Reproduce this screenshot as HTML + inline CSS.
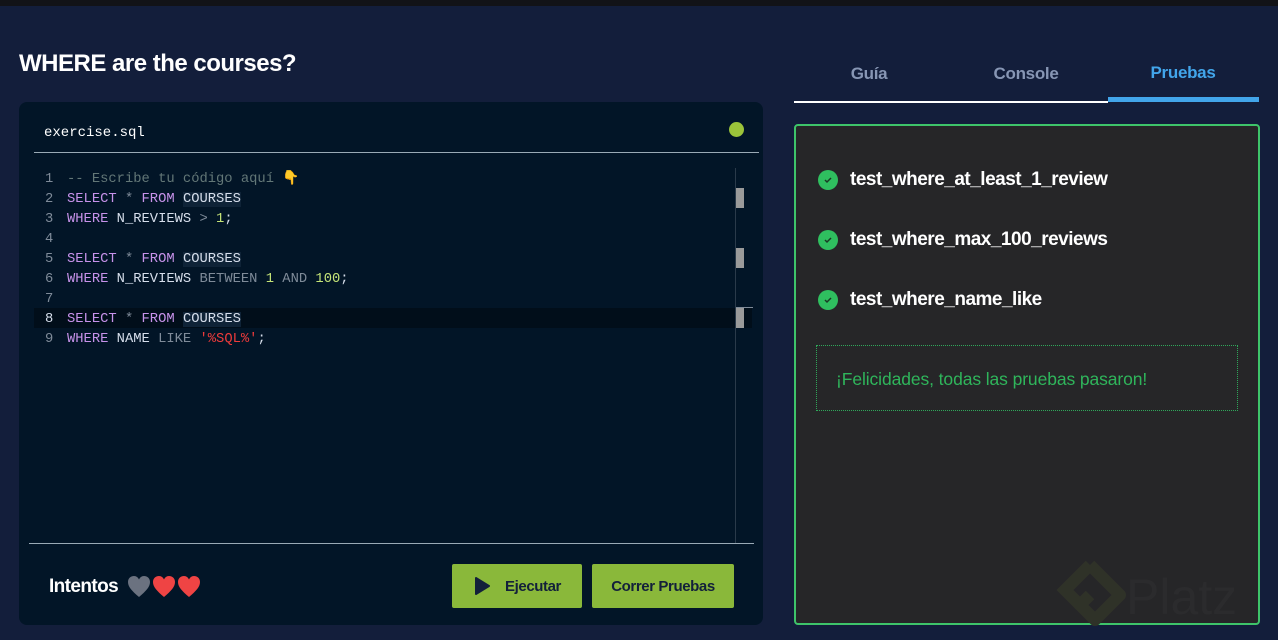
<!DOCTYPE html>
<html><head><meta charset="utf-8"><style>
*{margin:0;padding:0;box-sizing:border-box}
body{width:1278px;height:640px;background:#131e3b;font-family:"Liberation Sans",sans-serif;position:relative;overflow:hidden}
.abs{position:absolute}
.code{font-family:"Liberation Mono",monospace;font-size:13.8px;line-height:20px;white-space:pre;color:#d6deeb}
.k{color:#c792ea}.g{color:#7f8b99}.n{color:#c5e478}.s{color:#ef3b3b}.c{color:#637777}
.hl{background:#0f2337}
.tab{position:absolute;top:64px;font-weight:bold;font-size:17px;color:#8796b4;transform:translateX(-50%);letter-spacing:-0.3px}
.t{position:absolute;left:818px;display:flex;align-items:center;color:#fff;font-weight:bold;font-size:19px;letter-spacing:-0.5px}
.ck{width:20px;height:20px;border-radius:50%;background:#2fbf5f;margin-right:12px;display:flex;align-items:center;justify-content:center}
.btn{position:absolute;top:564px;height:44px;background:#8ab83a;border-radius:2px;color:#13203a;font-weight:bold;font-size:15px;display:flex;align-items:center;justify-content:center;letter-spacing:-0.4px}
</style></head><body>
<div class="abs" style="left:0;top:0;width:1278px;height:6px;background:#121317"></div>
<div class="abs" style="left:19px;top:50px;color:#fff;font-weight:bold;font-size:24px;letter-spacing:-0.5px">WHERE are the courses?</div>

<div class="abs" style="left:19px;top:102px;width:744px;height:523px;background:#021527;border-radius:8px"></div>
<div class="abs code" style="left:44px;top:123px;color:#fff;font-size:14px">exercise.sql</div>
<div class="abs" style="left:729px;top:122px;width:15px;height:15px;border-radius:50%;background:#9bc33a"></div>
<div class="abs" style="left:34px;top:152px;width:725px;height:1px;background:#9aaab6"></div>
<div class="abs" style="left:34px;top:308px;width:718px;height:20px;background:#010e1a"></div>
<div class="abs code g" style="left:45px;top:170px">1
2
3
4
5
6
7
<span style="color:#d6deeb">8</span>
9</div>
<div class="abs code" style="left:67px;top:170px"><span class="c">-- Escribe tu código aquí </span><span style="color:#f0b030">👇</span>
<span class="k">SELECT</span> <span class="g">*</span> <span class="k">FROM</span> <span class="hl">COURSES</span>
<span class="k">WHERE</span> N_REVIEWS <span class="g">&gt;</span> <span class="n">1</span>;

<span class="k">SELECT</span> <span class="g">*</span> <span class="k">FROM</span> <span class="hl">COURSES</span>
<span class="k">WHERE</span> N_REVIEWS <span class="g">BETWEEN</span> <span class="n">1</span> <span class="g">AND</span> <span class="n">100</span>;

<span class="k">SELECT</span> <span class="g">*</span> <span class="k">FROM</span> <span class="hl">COURSES</span>
<span class="k">WHERE</span> NAME <span class="g">LIKE</span> <span class="s">'%SQL%'</span>;</div>
<div class="abs" style="left:735px;top:168px;width:1px;height:375px;background:#2a3a4a"></div>
<div class="abs" style="left:736px;top:188px;width:8px;height:20px;background:#9a9a9a"></div>
<div class="abs" style="left:736px;top:248px;width:8px;height:20px;background:#9a9a9a"></div>
<div class="abs" style="left:736px;top:308px;width:8px;height:20px;background:#9a9a9a"></div>
<div class="abs" style="left:736px;top:307px;width:17px;height:1px;background:#7f8b99"></div>
<div class="abs" style="left:29px;top:543px;width:725px;height:1px;background:#9aaab6"></div>
<div class="abs" style="left:49px;top:576px;color:#fff;font-weight:bold;font-size:19px;letter-spacing:-0.6px">Intentos</div>
<svg class="abs" style="left:128px;top:576px" width="76" height="22" viewBox="0 0 76 22">
<g id="h"><path d="M11 21 C4 15 0 11 0 6 C0 2 3 0 6 0 C8.5 0 10 1.5 11 3.5 C12 1.5 13.5 0 16 0 C19 0 22 2 22 6 C22 11 18 15 11 21 Z" fill="#6b7280"/></g>
<path transform="translate(25 0)" d="M11 21 C4 15 0 11 0 6 C0 2 3 0 6 0 C8.5 0 10 1.5 11 3.5 C12 1.5 13.5 0 16 0 C19 0 22 2 22 6 C22 11 18 15 11 21 Z" fill="#ef4444"/>
<path transform="translate(50 0)" d="M11 21 C4 15 0 11 0 6 C0 2 3 0 6 0 C8.5 0 10 1.5 11 3.5 C12 1.5 13.5 0 16 0 C19 0 22 2 22 6 C22 11 18 15 11 21 Z" fill="#ef4444"/>
</svg>
<div class="btn" style="left:452px;width:130px"><svg width="18" height="18" viewBox="0 0 18 18" style="margin-right:14px"><path d="M3 1 L16 9 L3 17 Z" fill="#13203a" stroke="#13203a" stroke-linejoin="round" stroke-width="2"/></svg>Ejecutar</div>
<div class="btn" style="left:592px;width:142px">Correr Pruebas</div>

<div class="tab" style="left:869px">Guía</div>
<div class="tab" style="left:1026px">Console</div>
<div class="tab" style="left:1183px;top:63px;color:#42a5ea">Pruebas</div>
<div class="abs" style="left:794px;top:101px;width:314px;height:2px;background:#fff"></div>
<div class="abs" style="left:1108px;top:97px;width:151px;height:5px;background:#42a5ea"></div>

<div class="abs" style="left:794px;top:124px;width:466px;height:501px;background:#262628;border:2px solid #3ec46a;border-radius:4px"></div>
<svg class="abs" style="left:1050px;top:560px" width="80" height="80" viewBox="0 0 80 80"><path d="M40 5 L70 35 L45 60 L30 45 L40 35" fill="none" stroke="#2f3228" stroke-width="12" stroke-linejoin="round"/><path d="M30 45 L15 30 L40 5" fill="none" stroke="#2f3228" stroke-width="12"/></svg>
<div class="abs" style="left:1126px;top:568px;font-size:50px;color:#2b2b2d">Platz</div>
<div class="t" style="top:169px"><div class="ck"><svg width="10" height="10" viewBox="0 0 10 10"><path d="M2 5 L4 7 L8 3" fill="none" stroke="#1a3a25" stroke-width="1.5"/></svg></div>test_where_at_least_1_review</div>
<div class="t" style="top:229px"><div class="ck"><svg width="10" height="10" viewBox="0 0 10 10"><path d="M2 5 L4 7 L8 3" fill="none" stroke="#1a3a25" stroke-width="1.5"/></svg></div>test_where_max_100_reviews</div>
<div class="t" style="top:289px"><div class="ck"><svg width="10" height="10" viewBox="0 0 10 10"><path d="M2 5 L4 7 L8 3" fill="none" stroke="#1a3a25" stroke-width="1.5"/></svg></div>test_where_name_like</div>
<div class="abs" style="left:816px;top:345px;width:422px;height:66px;border:1px dotted #2fa85a;color:#2fb55b;font-size:17.5px;padding:23px 0 0 19px;letter-spacing:-0.1px">¡Felicidades, todas las pruebas pasaron!</div>
</body></html>
